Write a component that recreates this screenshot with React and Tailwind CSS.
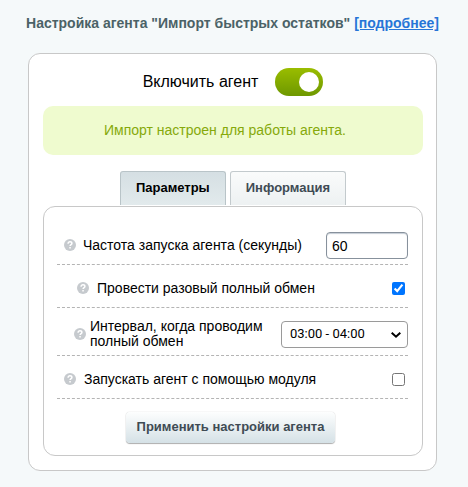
import React, { useState } from 'react';

const INTERVALS = ['00:00 - 01:00', '01:00 - 02:00', '02:00 - 03:00', '03:00 - 04:00', '04:00 - 05:00'];

const HelpIcon = () => (
    <svg className="h-3 w-3 shrink-0" viewBox="0 0 12 12" aria-hidden="true">
        <circle cx="6" cy="6" r="6" fill="#c6cace" />
        <path d="M4.1 4.7C4.1 3.4 5 2.8 6 2.8s1.9.6 1.9 1.6c0 1.2-1.8 1.2-1.8 2.6" fill="none" stroke="#fff" strokeWidth="1.5" />
        <rect x="5.3" y="8" width="1.5" height="1.5" fill="#fff" />
    </svg>
);

const Tab = ({ active, onClick, children }) => (
    <button
        type="button"
        role="tab"
        aria-selected={active}
        onClick={onClick}
        className={`h-[34px] rounded-t-[3px] border border-b-0 px-[15px] text-[13px] font-bold ${
            active
                ? 'border-[#b9c4c8] bg-linear-to-b from-[#d5dfe3] to-[#e2eaec] text-black'
                : 'border-[#c3cacd] bg-linear-to-b from-[#fafbfb] to-[#edf1f2] text-[#3f4b54]'
        }`}
    >
        {children}
    </button>
);

const App = () => {
    const [enabled, setEnabled] = useState(true);
    const [tab, setTab] = useState('params');
    const [period, setPeriod] = useState('60');
    const [fullOnce, setFullOnce] = useState(true);
    const [interval, setInterval] = useState('03:00 - 04:00');
    const [useModule, setUseModule] = useState(false);

    return (
        <div className="min-h-screen bg-[#f5f9fa] pt-3 pr-[31px] pb-4 pl-7 font-['Liberation_Sans',Arial,sans-serif] text-sm text-black">
            {/* Title */}
            <h1 className="-mx-5 text-center text-sm leading-[22px] font-bold text-[#4b6267]">
                Настройка агента "Импорт быстрых остатков"{' '}
                <a href="#details" className="text-[#2675d7] underline">[подробнее]</a>
            </h1>

            <div className="mt-[19px] rounded-xl border border-[#c8c8c8] bg-white py-[14px] pr-[13px] pl-[14px]">
                {/* Agent switch */}
                <label className="flex items-center justify-center gap-[17px] text-base leading-7">
                    Включить агент
                    <input
                        type="checkbox"
                        role="switch"
                        className="peer sr-only"
                        checked={enabled}
                        onChange={(e) => setEnabled(e.target.checked)}
                    />
                    <span className="flex h-7 w-12 rounded-full bg-gray-300 p-1 peer-checked:justify-end peer-checked:bg-linear-to-b peer-checked:from-[#9abd00] peer-checked:to-[#6e9800]">
                        <span className="h-5 w-5 rounded-full bg-white"></span>
                    </span>
                </label>

                <div className="mt-[10px] rounded-[10px] bg-[#effbcf] py-[14px] pr-4 text-center leading-[21px] text-[#86a90b]">
                    Импорт настроен для работы агента.
                </div>

                {/* Tabs */}
                <div role="tablist" className="mt-4 flex justify-center gap-1">
                    <Tab active={tab === 'params'} onClick={() => setTab('params')}>Параметры</Tab>
                    <Tab active={tab === 'info'} onClick={() => setTab('info')}>Информация</Tab>
                </div>

                <form className="mt-px rounded-xl border border-[#c8c8c8] pr-[14px] pb-3 pl-[13px]" onSubmit={(e) => e.preventDefault()}>
                    <div className="flex h-[58px] items-end justify-between border-b border-dashed border-[#b4b4b4] pb-[5px] pl-[7px]">
                        <label htmlFor="period" className="flex h-[27px] items-center gap-[7px] pb-px">
                            <HelpIcon />
                            Частота запуска агента (секунды)
                        </label>
                        <input
                            id="period"
                            type="text"
                            value={period}
                            onChange={(e) => setPeriod(e.target.value)}
                            className="h-[27px] w-[82px] rounded border border-[#87919c] bg-white px-[5px] shadow-[inset_0_1px_1px_#c5cdd5]"
                        />
                    </div>

                    <div className="flex h-[43px] items-center justify-between border-b border-dashed border-[#b4b4b4] pt-1 pr-[3px] pl-5">
                        <label htmlFor="full" className="flex items-center gap-2">
                            <HelpIcon />
                            Провести разовый полный обмен
                        </label>
                        <input
                            id="full"
                            type="checkbox"
                            className="h-[13px] w-[13px] accent-[#0075ff]"
                            checked={fullOnce}
                            onChange={(e) => setFullOnce(e.target.checked)}
                        />
                    </div>

                    <div className="flex h-12 items-center justify-between border-b border-dashed border-[#b4b4b4] pt-[6px] pl-[17px]">
                        <label htmlFor="interval" className="flex items-center gap-1 pb-0.5 leading-[15px]">
                            <HelpIcon />
                            <span>Интервал, когда проводим<br />полный обмен</span>
                        </label>
                        <div className="relative">
                            <select
                                id="interval"
                                value={interval}
                                onChange={(e) => setInterval(e.target.value)}
                                className="h-[27px] w-[127px] appearance-none rounded border border-[#9a9a9a] bg-white pl-2 font-[Roboto,sans-serif] text-[13px]"
                            >
                                {INTERVALS.map((item) => (
                                    <option key={item}>{item}</option>
                                ))}
                            </select>
                            <svg className="pointer-events-none absolute top-[10px] right-[7px] h-2 w-[10px]" viewBox="0 0 10 8" fill="none" stroke="#000" strokeWidth="2">
                                <path d="M.7 1.7 5 5.7 9.3 1.7" />
                            </svg>
                        </div>
                    </div>

                    <div className="flex h-[43px] items-center justify-between border-b border-dashed border-[#b4b4b4] pt-1 pr-[3px] pl-[7px]">
                        <label htmlFor="module" className="flex items-center gap-2">
                            <HelpIcon />
                            Запускать агент с помощью модуля
                        </label>
                        <input
                            id="module"
                            type="checkbox"
                            className="h-[13px] w-[13px]"
                            checked={useModule}
                            onChange={(e) => setUseModule(e.target.checked)}
                        />
                    </div>

                    <div className="mt-[13px] flex justify-center pr-1">
                        <button
                            type="submit"
                            className="h-[31px] rounded bg-linear-to-b from-[#fdfefe] to-[#d5e1e6] px-[11px] text-[13px] font-bold text-[#3f4b54] shadow-[0_0_1px_#0000004d,0_1px_1px_#0000004d]"
                        >
                            Применить настройки агента
                        </button>
                    </div>
                </form>
            </div>
        </div>
    );
};

export default App;
